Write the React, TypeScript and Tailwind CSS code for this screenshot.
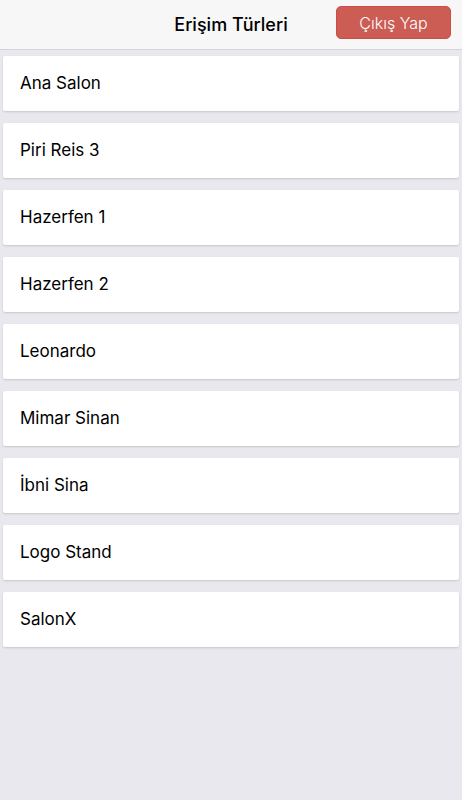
const rooms = [
  "Ana Salon",
  "Piri Reis 3",
  "Hazerfen 1",
  "Hazerfen 2",
  "Leonardo",
  "Mimar Sinan",
  "İbni Sina",
  "Logo Stand",
  "SalonX",
];

export default function App() {
  return (
    <div
      className="min-h-[800px] w-[462px] bg-[#e9e8ee] text-black"
      style={{ fontFamily: "Inter, 'Liberation Sans', sans-serif" }}
    >
      {/* top bar */}
      <header className="relative flex h-[50px] items-center justify-center border-b border-[#d3d3d8] bg-[#f7f7f7]">
        <h1 className="text-[18px] font-medium">Erişim Türleri</h1>
        <button className="absolute right-[11px] top-[6px] flex h-[33px] w-[115px] items-center justify-center rounded-[5px] border border-[#cf4c42] bg-[#cb5d55] text-[16px] font-light text-white">
          Çıkış Yap
        </button>
      </header>

      {/* list */}
      <div className="flex flex-col gap-[12px] px-[3px] pt-[6px]">
        {rooms.map((name) => (
          <div
            key={name}
            className="flex h-[55px] items-center rounded-[2px] bg-white pl-[17px] pt-[1px] text-[17px] shadow-[0_1px_2px_rgba(0,0,0,0.15)]"
          >
            {name}
          </div>
        ))}
      </div>
    </div>
  );
}
